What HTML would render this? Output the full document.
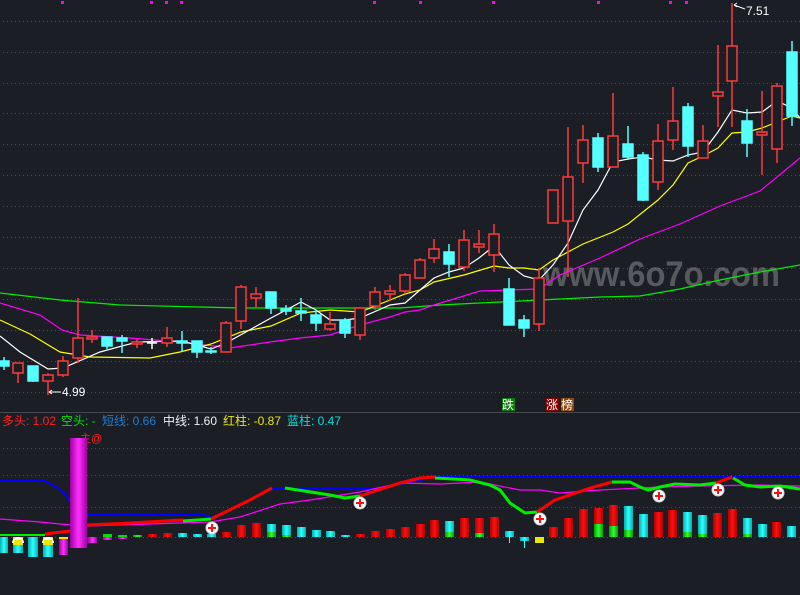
<!DOCTYPE html>
<html><head><meta charset="utf-8"><style>
html,body{margin:0;padding:0;background:#1c1e26;}
svg{display:block}
text{font-family:"Liberation Sans","Noto Sans CJK SC",sans-serif}
</style></head><body>
<svg width="800" height="595" viewBox="0 0 800 595" xmlns="http://www.w3.org/2000/svg">
<rect width="800" height="595" fill="#1c1e26"/>
<g stroke="#4a4c55" stroke-width="1" stroke-dasharray="1 3">
<line x1="3" y1="21.5" x2="800" y2="21.5"/><line x1="3" y1="52.5" x2="800" y2="52.5"/><line x1="3" y1="83.5" x2="800" y2="83.5"/><line x1="3" y1="113.5" x2="800" y2="113.5"/><line x1="3" y1="144.5" x2="800" y2="144.5"/><line x1="3" y1="175.5" x2="800" y2="175.5"/><line x1="3" y1="206.5" x2="800" y2="206.5"/><line x1="3" y1="237.5" x2="800" y2="237.5"/><line x1="3" y1="268.5" x2="800" y2="268.5"/><line x1="3" y1="299.5" x2="800" y2="299.5"/><line x1="3" y1="330.5" x2="800" y2="330.5"/><line x1="3" y1="361.5" x2="800" y2="361.5"/><line x1="3" y1="392.5" x2="800" y2="392.5"/>
<line x1="3" y1="448.5" x2="800" y2="448.5"/><line x1="3" y1="475.5" x2="800" y2="475.5"/><line x1="3" y1="507.5" x2="800" y2="507.5"/><line x1="3" y1="537.5" x2="800" y2="537.5"/>
</g>
<line x1="0" y1="412.5" x2="800" y2="412.5" stroke="#45484f"/>
<g fill="#ff00ff"><rect x="61" y="1" width="3" height="3"/><rect x="150" y="1" width="3" height="3"/><rect x="165" y="1" width="3" height="3"/><rect x="180" y="1" width="3" height="3"/><rect x="373" y="1" width="3" height="3"/><rect x="419" y="1" width="3" height="3"/><rect x="492" y="1" width="3" height="3"/><rect x="597" y="1" width="3" height="3"/><rect x="669" y="1" width="3" height="3"/><rect x="685" y="1" width="3" height="3"/></g>
<text x="543" y="286" font-size="35" font-weight="bold" fill="#8a8a8a" fill-opacity="0.55" textLength="237" lengthAdjust="spacingAndGlyphs">www.6o7o.com</text>
<g fill="none" stroke-width="1.2">
<polyline stroke="#00ee00" points="0,293 60,300 120,305 200,307 240,308 300,308 400,308 440,305 500,302 600,297 640,296 680,289 720,280 760,272 800,265"/>
<polyline stroke="#ff00ff" points="0,303 40,315 62,330 80,335 130,338 180,342 230,348 270,342 300,338 330,335 360,325 390,317 405,312 420,310 434,305 480,291 510,290 539,289 560,275 600,258 640,239 680,224 720,206 760,191 800,158"/>
<polyline stroke="#ffff00" points="0,320 30,334 60,352 90,357 150,358 180,352 211,344 241,332 271,326 301,313 330,310 360,312 390,300 405,294 420,290 434,282 464,275 494,266 509,268 524,268 539,270 553,260 568,252 583,244 613,232 628,224 643,212 658,200 673,185 688,163 703,156 718,148 732,133 747,132 762,128 777,122 792,116 800,118"/>
<polyline stroke="#ffffff" points="0,336 20,352 48,369 63,368 100,352 137,342 182,341 211,349 226,343 271,318 301,302 316,310 330,320 345,320 360,318 390,305 405,303 420,290 434,278 449,272 464,268 479,258 494,246 509,265 524,276 539,280 553,265 568,243 583,210 598,190 613,162 628,159 643,157 658,160 673,161 688,155 703,152 718,132 732,110 747,113 762,112 777,101 792,108 800,118"/>
</g>
<g stroke-width="1.5">
<g stroke="#ff3a3a" fill="#1c1e26">
<line x1="18" y1="363" x2="18" y2="383"/><rect x="13" y="363" width="10" height="10"/>
<line x1="48" y1="373" x2="48" y2="395"/><rect x="43" y="375" width="10" height="6"/>
<line x1="63" y1="356" x2="63" y2="377"/><rect x="58" y="361" width="10" height="14"/>
<line x1="78" y1="298" x2="78" y2="363"/><rect x="73" y="338" width="10" height="20"/>
<line x1="92" y1="330" x2="92" y2="343"/><rect x="87" y="337" width="10" height="2"/>
<line x1="137" y1="339" x2="137" y2="348"/><rect x="132" y="342" width="10" height="2"/>
<line x1="167" y1="327" x2="167" y2="347"/><rect x="162" y="338" width="10" height="5"/>
<line x1="226" y1="321" x2="226" y2="352"/><rect x="221" y="323" width="10" height="29"/>
<line x1="241" y1="285" x2="241" y2="329"/><rect x="236" y="287" width="10" height="34"/>
<line x1="256" y1="287" x2="256" y2="307"/><rect x="251" y="294" width="10" height="4"/>
<line x1="330" y1="312" x2="330" y2="331"/><rect x="325" y="324" width="10" height="5"/>
<line x1="360" y1="308" x2="360" y2="340"/><rect x="355" y="308" width="10" height="27"/>
<line x1="375" y1="287" x2="375" y2="310"/><rect x="370" y="292" width="10" height="14"/>
<line x1="390" y1="285" x2="390" y2="301"/><rect x="385" y="291" width="10" height="3"/>
<line x1="405" y1="273" x2="405" y2="294"/><rect x="400" y="275" width="10" height="16"/>
<line x1="420" y1="258" x2="420" y2="278"/><rect x="415" y="260" width="10" height="18"/>
<line x1="434" y1="239" x2="434" y2="263"/><rect x="429" y="249" width="10" height="9"/>
<line x1="464" y1="230" x2="464" y2="271"/><rect x="459" y="240" width="10" height="27"/>
<line x1="479" y1="230" x2="479" y2="253"/><rect x="474" y="244" width="10" height="3"/>
<line x1="494" y1="224" x2="494" y2="272"/><rect x="489" y="234" width="10" height="21"/>
<line x1="539" y1="268" x2="539" y2="331"/><rect x="534" y="278" width="10" height="46"/>
<rect x="548" y="190" width="10" height="33"/>
<line x1="568" y1="127" x2="568" y2="277"/><rect x="563" y="177" width="10" height="44"/>
<line x1="583" y1="125" x2="583" y2="183"/><rect x="578" y="140" width="10" height="23"/>
<line x1="613" y1="93" x2="613" y2="167"/><rect x="608" y="136" width="10" height="31"/>
<line x1="658" y1="124" x2="658" y2="190"/><rect x="653" y="141" width="10" height="41"/>
<line x1="673" y1="87" x2="673" y2="150"/><rect x="668" y="121" width="10" height="19"/>
<line x1="703" y1="125" x2="703" y2="158"/><rect x="698" y="141" width="10" height="17"/>
<line x1="718" y1="45" x2="718" y2="127"/><rect x="713" y="92" width="10" height="4"/>
<line x1="732" y1="3" x2="732" y2="127"/><rect x="727" y="46" width="10" height="35"/>
<line x1="762" y1="91" x2="762" y2="175"/><rect x="757" y="132" width="10" height="3"/>
<line x1="777" y1="83" x2="777" y2="163"/><rect x="772" y="86" width="10" height="63"/>
</g>
<g stroke="#54ffff" fill="#54ffff">
<line x1="4" y1="357" x2="4" y2="370"/><rect x="-1" y="361" width="10" height="5"/>
<rect x="28" y="366" width="10" height="15"/><line x1="33" y1="366" x2="33" y2="382"/>
<line x1="107" y1="337" x2="107" y2="349"/><rect x="102" y="337" width="10" height="9"/>
<line x1="122" y1="335" x2="122" y2="353"/><rect x="117" y="338" width="10" height="3"/>
<line x1="182" y1="331" x2="182" y2="352"/><rect x="177" y="341" width="10" height="2"/>
<line x1="197" y1="341" x2="197" y2="358"/><rect x="192" y="341" width="10" height="11"/>
<line x1="211" y1="347" x2="211" y2="354"/><rect x="206" y="351" width="10" height="1"/>
<line x1="271" y1="292" x2="271" y2="314"/><rect x="266" y="292" width="10" height="16"/>
<line x1="286" y1="305" x2="286" y2="315"/><rect x="281" y="309" width="10" height="2"/>
<line x1="301" y1="298" x2="301" y2="321"/><rect x="296" y="311" width="10" height="2"/>
<line x1="316" y1="310" x2="316" y2="331"/><rect x="311" y="315" width="10" height="8"/>
<line x1="345" y1="318" x2="345" y2="338"/><rect x="340" y="320" width="10" height="13"/>
<line x1="449" y1="244" x2="449" y2="277"/><rect x="444" y="252" width="10" height="12"/>
<line x1="509" y1="278" x2="509" y2="325"/><rect x="504" y="289" width="10" height="36"/>
<line x1="524" y1="315" x2="524" y2="337"/><rect x="519" y="320" width="10" height="8"/>
<line x1="598" y1="133" x2="598" y2="172"/><rect x="593" y="138" width="10" height="29"/>
<line x1="628" y1="126" x2="628" y2="160"/><rect x="623" y="144" width="10" height="13"/>
<line x1="643" y1="152" x2="643" y2="201"/><rect x="638" y="155" width="10" height="45"/>
<line x1="688" y1="103" x2="688" y2="157"/><rect x="683" y="107" width="10" height="39"/>
<line x1="747" y1="109" x2="747" y2="157"/><rect x="742" y="121" width="10" height="22"/>
<line x1="792" y1="41" x2="792" y2="126"/><rect x="787" y="52" width="10" height="64"/>
</g>
<g stroke="#ffffff"><line x1="152" y1="338" x2="152" y2="349"/><line x1="147" y1="343" x2="157" y2="343"/></g>
</g>
<g fill="#ffffff" font-size="12">
<path d="M734,5 L745,9 M734,5 l3,-2 M734,5 l3,2" stroke="#fff" fill="none"/>
<text x="746" y="15">7.51</text>
<path d="M49,392 L61,392 M49,392 l3,-2 M49,392 l3,2" stroke="#fff" fill="none"/>
<text x="62" y="396">4.99</text>
</g>
<g font-size="12" fill="#fff">
<rect x="502" y="398" width="13" height="13" fill="#0a7a0a"/><text x="502" y="409">跌</text>
<rect x="546" y="398" width="13" height="13" fill="#800000"/><text x="546" y="409">涨</text>
<rect x="561" y="398" width="13" height="13" fill="#8a4a10"/><text x="561" y="409">榜</text>
</g>
<text y="425" font-size="12"><tspan x="2" fill="#ff2020">多头: 1.02</tspan><tspan x="61" fill="#00e000">空头: -</tspan><tspan x="102" fill="#1e7fd0">短线: 0.66</tspan><tspan x="163" fill="#f0f0f0">中线: 1.60</tspan><tspan x="223" fill="#e8e800">红柱: -0.87</tspan><tspan x="287" fill="#00e0e0">蓝柱: 0.47</tspan></text>
<text x="80" y="442" font-size="11" fill="#ff2020">主@</text>
<defs>
<linearGradient id="gm" x1="0" x2="1"><stop offset="0" stop-color="#a000a0"/><stop offset=".5" stop-color="#ff30ff"/><stop offset="1" stop-color="#a000a0"/></linearGradient>
<linearGradient id="gr" x1="0" x2="1"><stop offset="0" stop-color="#b00000"/><stop offset=".5" stop-color="#ff1010"/><stop offset="1" stop-color="#b00000"/></linearGradient>
<linearGradient id="gc" x1="0" x2="1"><stop offset="0" stop-color="#00b0b0"/><stop offset=".5" stop-color="#30ffff"/><stop offset="1" stop-color="#00b0b0"/></linearGradient>
<linearGradient id="gg" x1="0" x2="1"><stop offset="0" stop-color="#00a000"/><stop offset=".5" stop-color="#30ff30"/><stop offset="1" stop-color="#00a000"/></linearGradient>
</defs>
<g fill="none">
<polyline stroke="#0000ff" stroke-width="2" points="0,480 45,481 58,488 66,495 72,505 88,514 200,514 210,517 213,518"/>
<polyline stroke="#0000ff" stroke-width="2" points="272,488 380,488 435,477 800,477"/>
<polyline stroke="#ff00ff" stroke-width="1.2" points="0,519 40,522 60,524 88,526 210,522 240,517 280,504 310,500 360,492 400,483 440,484 480,482 520,490 540,490 560,493 600,490 660,487 700,486 760,485 800,486"/>
<polyline stroke="#00ee00" stroke-width="2" points="0,535 45,535"/>
<polyline stroke="#ff0000" stroke-width="3" points="45,534 70,531 88,525 130,523 183,520"/>
<polyline stroke="#00ee00" stroke-width="3" points="183,521 211,519"/>
<polyline stroke="#ff0000" stroke-width="3" points="211,519 250,500 272,488"/>
<polyline stroke="#00ee00" stroke-width="3" points="285,488 330,495 345,498 360,496"/>
<polyline stroke="#ff0000" stroke-width="3" points="360,496 400,483 420,478 435,477"/>
<polyline stroke="#00ee00" stroke-width="3" points="435,478 470,480 490,485 500,490 510,503 525,513 537,512"/>
<polyline stroke="#ff0000" stroke-width="3" points="537,512 555,500 570,495 590,488 612,482"/>
<polyline stroke="#00ee00" stroke-width="3" points="612,482 630,482 640,487 648,490 660,487 675,484 700,485 716,483"/>
<polyline stroke="#ff0000" stroke-width="3" points="716,483 732,477"/>
<polyline stroke="#00ee00" stroke-width="3" points="733,478 745,485 760,487 780,486 800,489"/>
</g>
<g shape-rendering="crispEdges">
<rect x="70" y="438" width="17" height="110" fill="url(#gm)"/>
<rect x="0" y="537" width="8" height="16" fill="url(#gc)"/>
<rect x="13" y="537" width="10" height="16" fill="url(#gc)"/><rect x="13" y="537" width="10" height="8" fill="#e8e800"/>
<rect x="28" y="537" width="10" height="20" fill="url(#gc)"/>
<rect x="43" y="537" width="10" height="20" fill="url(#gc)"/><rect x="43" y="537" width="10" height="8" fill="#e8e800"/>
<rect x="59" y="537" width="9" height="18" fill="url(#gm)"/><rect x="59" y="537" width="9" height="2" fill="#e8e800"/>
<rect x="88" y="537" width="9" height="6" fill="url(#gm)"/>
<rect x="103" y="534" width="9" height="3" fill="#00e000"/><rect x="103" y="537" width="9" height="3" fill="url(#gm)"/>
<rect x="118" y="535" width="9" height="2" fill="#00e000"/><rect x="118" y="537" width="9" height="2" fill="url(#gm)"/>
<rect x="133" y="535" width="9" height="2" fill="url(#gg)"/>
<rect x="148" y="534" width="9" height="3" fill="url(#gr)"/>
<rect x="163" y="533" width="9" height="4" fill="url(#gr)"/>
<rect x="178" y="533" width="9" height="4" fill="url(#gc)"/>
<rect x="193" y="534" width="9" height="3" fill="url(#gc)"/>
<rect x="207" y="534" width="9" height="3" fill="url(#gc)"/>
<rect x="222" y="532" width="9" height="5" fill="url(#gr)"/>
<rect x="237" y="525" width="9" height="12" fill="url(#gr)"/>
<rect x="252" y="523" width="9" height="14" fill="url(#gr)"/>
<rect x="267" y="524" width="9" height="13" fill="url(#gc)"/><rect x="267" y="532" width="9" height="5" fill="url(#gg)"/>
<rect x="282" y="525" width="9" height="12" fill="url(#gc)"/><rect x="282" y="535" width="9" height="2" fill="url(#gg)"/>
<rect x="297" y="527" width="9" height="10" fill="url(#gc)"/>
<rect x="312" y="530" width="9" height="7" fill="url(#gc)"/>
<rect x="326" y="531" width="9" height="6" fill="url(#gc)"/>
<rect x="341" y="535" width="9" height="2" fill="url(#gc)"/>
<rect x="356" y="534" width="9" height="3" fill="url(#gr)"/>
<rect x="371" y="531" width="9" height="6" fill="url(#gr)"/>
<rect x="386" y="529" width="9" height="8" fill="url(#gr)"/>
<rect x="401" y="527" width="9" height="10" fill="url(#gr)"/>
<rect x="416" y="524" width="9" height="13" fill="url(#gr)"/>
<rect x="430" y="520" width="9" height="17" fill="url(#gr)"/>
<rect x="445" y="521" width="9" height="16" fill="url(#gc)"/><rect x="445" y="532" width="9" height="5" fill="url(#gg)"/>
<rect x="460" y="518" width="9" height="19" fill="url(#gr)"/>
<rect x="475" y="518" width="9" height="19" fill="url(#gr)"/><rect x="475" y="533" width="9" height="4" fill="url(#gg)"/>
<rect x="490" y="517" width="9" height="20" fill="url(#gr)"/>
<rect x="505" y="531" width="9" height="6" fill="url(#gc)"/><rect x="509" y="537" width="1" height="6" fill="#30ffff"/>
<rect x="520" y="537" width="9" height="4" fill="url(#gc)"/><rect x="524" y="541" width="1" height="7" fill="#30ffff"/>
<rect x="535" y="537" width="9" height="6" fill="#e8e800"/>
<rect x="549" y="527" width="9" height="10" fill="url(#gr)"/>
<rect x="564" y="518" width="9" height="19" fill="url(#gr)"/>
<rect x="579" y="509" width="9" height="28" fill="url(#gr)"/>
<rect x="594" y="508" width="9" height="29" fill="url(#gr)"/><rect x="594" y="524" width="9" height="13" fill="url(#gg)"/>
<rect x="609" y="505" width="9" height="32" fill="url(#gr)"/><rect x="609" y="526" width="9" height="11" fill="url(#gg)"/>
<rect x="624" y="506" width="9" height="31" fill="url(#gc)"/><rect x="624" y="530" width="9" height="7" fill="url(#gg)"/>
<rect x="639" y="514" width="9" height="23" fill="url(#gc)"/>
<rect x="654" y="512" width="9" height="25" fill="url(#gr)"/>
<rect x="668" y="510" width="9" height="27" fill="url(#gr)"/>
<rect x="683" y="512" width="9" height="25" fill="url(#gc)"/><rect x="683" y="532" width="9" height="5" fill="url(#gg)"/>
<rect x="698" y="515" width="9" height="22" fill="url(#gc)"/><rect x="698" y="534" width="9" height="3" fill="url(#gg)"/>
<rect x="713" y="513" width="9" height="24" fill="url(#gr)"/>
<rect x="728" y="509" width="9" height="28" fill="url(#gr)"/>
<rect x="743" y="518" width="9" height="19" fill="url(#gc)"/><rect x="743" y="534" width="9" height="3" fill="url(#gg)"/>
<rect x="758" y="524" width="9" height="13" fill="url(#gc)"/>
<rect x="772" y="522" width="9" height="15" fill="url(#gr)"/>
<rect x="787" y="526" width="9" height="11" fill="url(#gc)"/>
</g>
<g>
<path d="M12,543 a6,6 0 0 1 12,0" fill="#fff"/><path d="M42,543 a6,6 0 0 1 12,0" fill="#fff"/>
<rect x="14" y="540" width="8" height="5" fill="#e8e800"/><rect x="44" y="540" width="8" height="5" fill="#e8e800"/>
</g>
<g stroke="#ff1010" stroke-width="2">
<circle cx="212" cy="528" r="6" fill="#fff" stroke="#ccc" stroke-width="1"/><path d="M208,528h8M212,524v8"/>
<circle cx="360" cy="503" r="6" fill="#fff" stroke="#ccc" stroke-width="1"/><path d="M356,503h8M360,499v8"/>
<circle cx="540" cy="519" r="6" fill="#fff" stroke="#ccc" stroke-width="1"/><path d="M536,519h8M540,515v8"/>
<circle cx="659" cy="496" r="6" fill="#fff" stroke="#ccc" stroke-width="1"/><path d="M655,496h8M659,492v8"/>
<circle cx="718" cy="490" r="6" fill="#fff" stroke="#ccc" stroke-width="1"/><path d="M714,490h8M718,486v8"/>
<circle cx="778" cy="493" r="6" fill="#fff" stroke="#ccc" stroke-width="1"/><path d="M774,493h8M778,489v8"/>
</g>
</svg>
</body></html>
